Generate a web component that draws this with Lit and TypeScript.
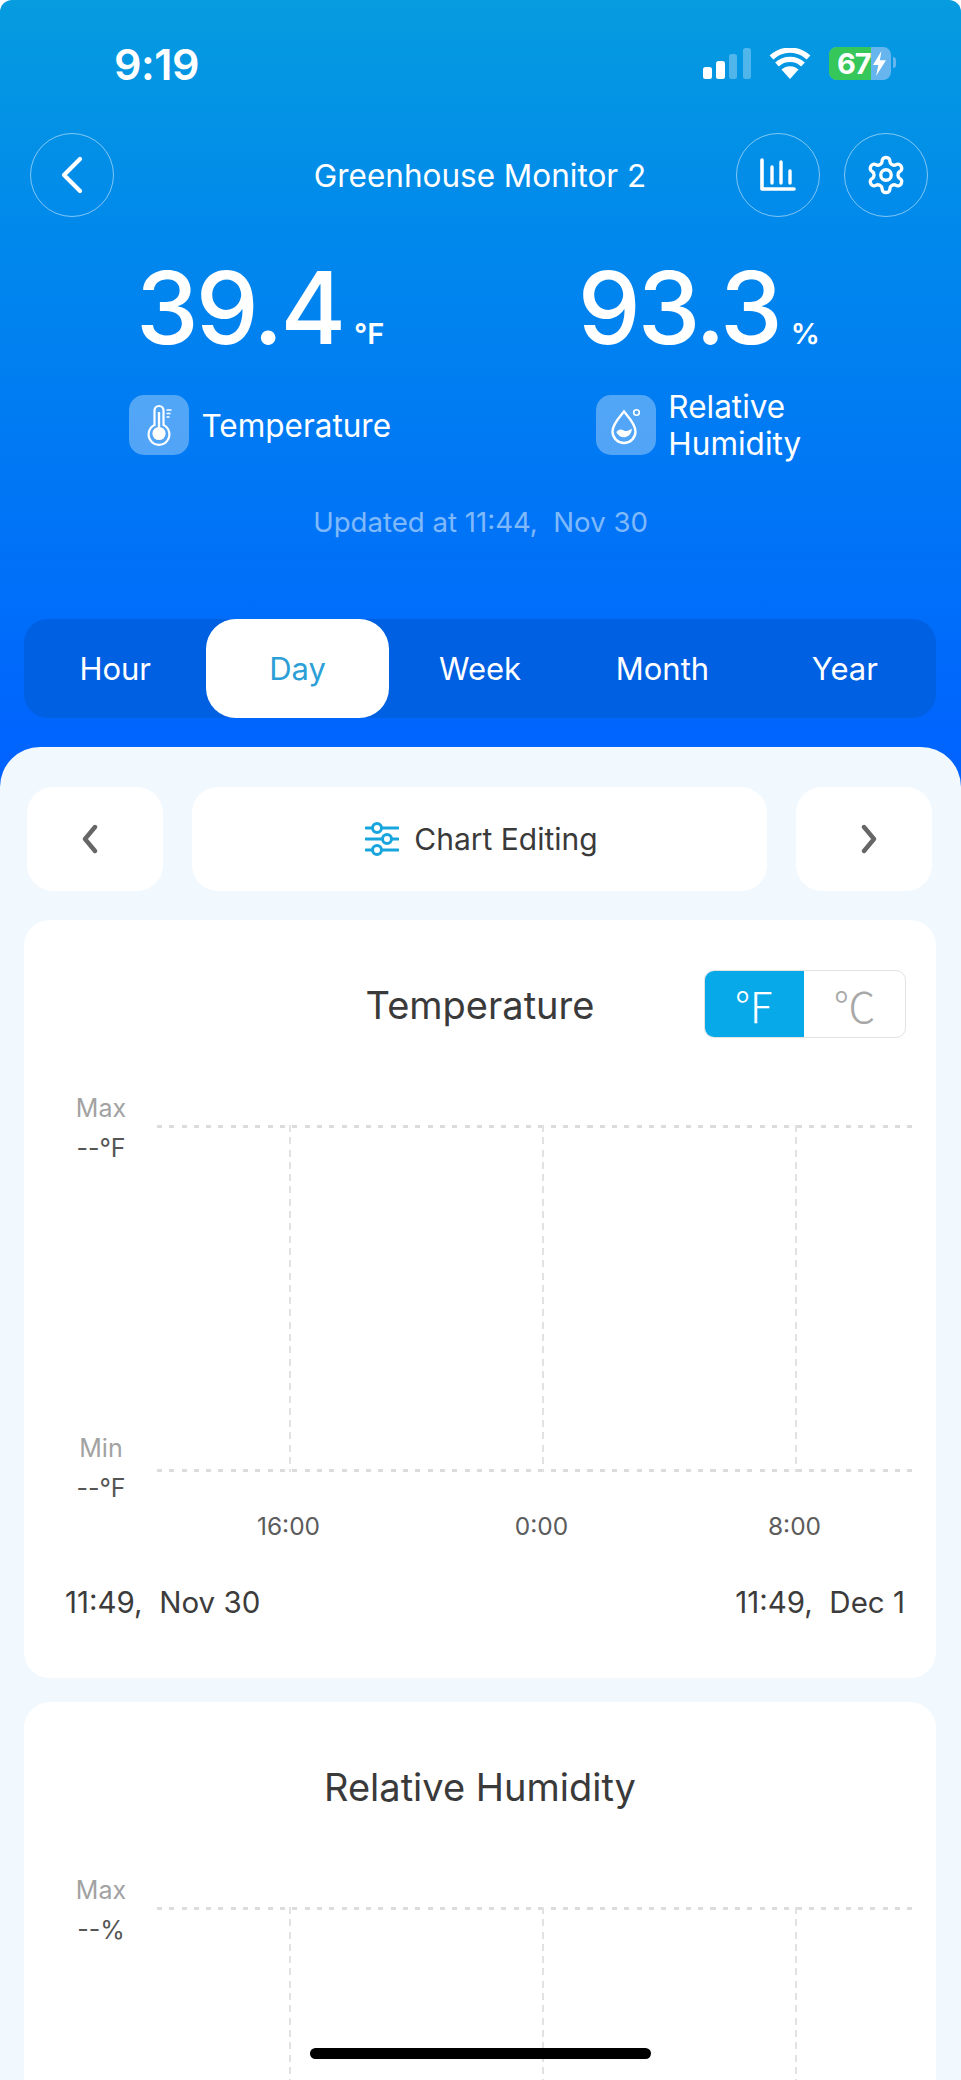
import { css, html, LitElement, svg } from "lit";
import { customElement } from "lit/decorators.js";

const tabs = ["Hour", "Day", "Week", "Month", "Year"];

@customElement("chart-card")
class ChartCard extends LitElement {
  static properties = {
    heading: {},
    unit: {},
    toggle: { type: Boolean },
    cropped: { type: Boolean },
  };

  heading = "";
  unit = "";
  toggle = false;
  // the lower card runs off the bottom of the screen, so its lower labels are never seen
  cropped = false;

  static styles = css`
    :host {
      display: block;
      background: #fff;
      border-radius: 26px;
      margin: 0 25px 0 24px;
      padding: 50px 0 0;
      height: 708px;
    }

    .head {
      position: relative;
      height: 70px;
      display: flex;
      align-items: center;
      justify-content: center;
      font-size: 38px;
      color: #3a3a3a;
    }

    .toggle {
      position: absolute;
      right: 30px;
      top: 0;
      display: flex;
      width: 202px;
      height: 68px;
      box-sizing: border-box;
      border: 1.5px solid #e2e2e2;
      border-radius: 10px;
      overflow: hidden;
      font-family: "Noto Sans CJK SC", sans-serif;
      font-size: 42px;
      font-weight: 300;
    }

    .toggle span {
      flex: 1;
      display: flex;
      align-items: center;
      justify-content: center;
      color: #a8a8a8;
    }

    .toggle .on {
      background: #08a9e9;
      color: #fff;
      margin: -1.5px 0 -1.5px -1.5px;
    }

    .chart {
      display: flex;
      margin-top: 47px;
    }

    .axis {
      width: 133px;
      height: 421px;
      flex: none;
      display: flex;
      flex-direction: column;
      justify-content: space-between;
      box-sizing: border-box;
      padding: 2px 0 0 39px;
    }

    .mark {
      width: 76px;
      text-align: center;
      font-size: 25px;
      line-height: 39.5px;
    }

    .mark .label {
      color: #a2a2a2;
      display: block;
    }

    .mark .value {
      color: #555;
      display: block;
    }

    .plot {
      flex: 1;
      min-width: 0;
      padding: 38px 21px 0 0;
    }

    .grid {
      display: grid;
      grid-template-columns: 132px 253px 253px 120px;
      height: 347px;
      background:
        repeating-linear-gradient(90deg, #dcdcdc 0 5px, transparent 5px 12.3px) 0 0 / 100% 3px no-repeat,
        repeating-linear-gradient(90deg, #dcdcdc 0 5px, transparent 5px 12.3px) 0 100% / 100% 3px no-repeat;
    }

    .grid i {
      display: block;
      background: repeating-linear-gradient(180deg, #e2e2e2 0 7px, transparent 7px 12.3px) 0 0 / 2px 100% no-repeat;
    }

    .grid i.blank {
      background: none;
    }

    .ticks {
      display: grid;
      grid-template-columns: 253px 253px 253px;
      margin: 38px 0 0 5px;
      font-size: 24.5px;
      line-height: 32px;
      color: #5c5c5c;
      text-align: center;
    }

    .span {
      display: flex;
      justify-content: space-between;
      margin-top: 40px;
      padding: 0 31px 0 41px;
      font-size: 29.5px;
      line-height: 40px;
      color: #3c3c3c;
      white-space: pre;
    }
  `;

  render() {
    return html`
      <div class="head">
        ${this.heading}
        ${this.toggle
          ? html`<div class="toggle"><span class="on">℉</span><span>℃</span></div>`
          : ""}
      </div>
      <div class="chart">
        <div class="axis">
          <div class="mark"><span class="label">Max</span><span class="value">--${this.unit}</span></div>
          ${this.cropped
            ? ""
            : html`<div class="mark"><span class="label">Min</span><span class="value">--${this.unit}</span></div>`}
        </div>
        <div class="plot">
          <div class="grid"><i class="blank"></i><i></i><i></i><i></i></div>
          ${this.cropped
            ? ""
            : html`<div class="ticks"><span>16:00</span><span>0:00</span><span>8:00</span></div>`}
        </div>
      </div>
      ${this.cropped
        ? ""
        : html`<div class="span"><span>11:49,  Nov 30</span><span>11:49,  Dec 1</span></div>`}
    `;
  }
}

@customElement("app-root")
class AppRoot extends LitElement {
  static styles = css`
    :host {
      display: block;
      position: relative;
      height: 2080px;
      overflow: hidden;
      border-radius: 12px 12px 0 0;
      font-family: Inter, "Noto Sans", sans-serif;
      background: #f1f8fe linear-gradient(180deg, #069cdf 0, #0088ec 240px, #0063ff 760px) 0 0 / 100% 800px no-repeat;
      color: #fff;
    }

    .status {
      display: flex;
      justify-content: space-between;
      align-items: flex-start;
      height: 133px;
      box-sizing: border-box;
      padding: 40px 70px 0 114px;
    }

    .time {
      font-size: 43px;
      line-height: 48px;
      font-weight: 600;
      letter-spacing: -0.5px;
    }

    .status-icons {
      display: flex;
      align-items: center;
      margin-top: 7px;
      gap: 18px;
    }

    .battery {
      position: relative;
      width: 62px;
      height: 33px;
      border-radius: 8px;
      overflow: hidden;
      background: #66b5ee;
      display: flex;
      align-items: center;
    }

    .battery .level {
      position: absolute;
      inset: 0 20px 0 0;
      background: #35c759;
    }

    .battery b {
      position: relative;
      font-size: 29px;
      line-height: 33px;
      font-weight: 700;
      padding-left: 8px;
      letter-spacing: -1px;
    }

    .battery svg {
      position: relative;
      margin-left: 2px;
    }

    .nub {
      position: absolute;
      right: 65px;
      top: 57px;
      width: 3px;
      height: 11px;
      border-radius: 0 3px 3px 0;
      background: #66b5ee;
    }

    .nav {
      display: flex;
      align-items: center;
      gap: 24px;
      padding: 0 33px 0 30px;
    }

    .title {
      flex: 1;
      text-align: center;
      font-size: 31.5px;
      padding-left: 110px;
      white-space: nowrap;
    }

    .round {
      width: 84px;
      height: 84px;
      box-sizing: border-box;
      flex: none;
      border: 1.5px solid rgba(255, 255, 255, 0.5);
      border-radius: 50%;
      display: flex;
      align-items: center;
      justify-content: center;
    }

    .readings {
      display: grid;
      grid-template-columns: 1fr 1fr;
      padding: 0 43px 0 41px;
      margin-top: 41px;
    }

    .reading {
      display: flex;
      flex-direction: column;
      align-items: center;
    }

    .value {
      display: flex;
      align-items: baseline;
      line-height: 100px;
    }

    .value strong {
      font-size: 100px;
      font-weight: 500;
      letter-spacing: -3px;
    }

    .value small {
      font-size: 29px;
      font-weight: 600;
      margin-left: 11px;
    }

    .name {
      display: flex;
      align-items: center;
      gap: 12px;
      height: 74px;
      margin-top: 4px;
      font-size: 31.5px;
      line-height: 37px;
    }

    .tile {
      width: 60px;
      height: 60px;
      border-radius: 15px;
      background: rgba(255, 255, 255, 0.32);
      flex: none;
    }

    .updated {
      text-align: center;
      margin-top: 40px;
      font-size: 27.6px;
      line-height: 40px;
      color: rgba(255, 255, 255, 0.5);
    }

    .tabs {
      display: flex;
      margin: 77px 25px 0 24px;
      height: 99px;
      background: #0060e2;
      border-radius: 24px;
    }

    .tab {
      flex: 1;
      display: flex;
      align-items: center;
      justify-content: center;
      font-size: 31px;
    }

    .tab.active {
      background: #fff;
      color: #2b9fd6;
      border-radius: 30px;
    }

    .sheet {
      margin-top: 29px;
      background: #f1f8fe;
      border-radius: 40px 40px 0 0;
      padding-top: 40px;
    }

    .tools {
      display: grid;
      grid-template-columns: 136px 1fr 136px;
      gap: 29px;
      margin: 0 29px 29px 27px;
      height: 104px;
    }

    .tool {
      background: #fff;
      border-radius: 26px;
      display: flex;
      align-items: center;
      justify-content: center;
      gap: 15px;
      font-size: 30px;
      color: #3a3a3a;
    }

    .tool.wide {
      padding-left: 4px;
    }

    .tool .prev {
      margin-right: 10px;
    }

    .tool .next {
      margin-left: 10px;
    }

    chart-card + chart-card {
      margin-top: 24px;
    }

    .home {
      position: absolute;
      left: 310px;
      bottom: 21px;
      width: 341px;
      height: 11px;
      border-radius: 6px;
      background: #000;
    }
  `;

  render() {
    return html`
      <div class="status">
        <div class="time">9:19</div>
        <div class="status-icons">
          <svg width="48" height="31" viewBox="0 0 48 31">
            <rect x="0" y="19" width="9" height="12" rx="2.5" fill="#fff" />
            <rect x="13" y="13" width="9" height="18" rx="2.5" fill="#fff" />
            <rect x="26" y="6" width="8" height="25" rx="2.5" fill="#fff" fill-opacity=".3" />
            <rect x="40" y="0" width="8" height="31" rx="2.5" fill="#fff" fill-opacity=".3" />
          </svg>
          <svg width="42" height="31" viewBox="0 0 42 31" fill="none" stroke="#fff" stroke-width="5.4">
            <path d="M21 31 12.5 21.5A12.5 12.5 0 0 1 29.5 21.5Z" fill="#fff" stroke="none" />
            <path d="M8 16.5A19 19 0 0 1 34 16.5" />
            <path d="M2.5 9.5A27 27 0 0 1 39.5 9.5" />
          </svg>
          <div class="battery">
            <div class="level"></div>
            <b>67</b>
            <svg width="13" height="25" viewBox="0 0 17 27" preserveAspectRatio="none">
              <path d="M11 0 0 15h7l-3 12 13-17H9z" fill="#fff" />
            </svg>
          </div>
        </div>
        <div class="nub"></div>
      </div>

      <div class="nav">
        <div class="round">
          <svg width="24" height="38" viewBox="0 0 24 38" fill="none" stroke="#fff" stroke-width="4.2" stroke-linecap="round" stroke-linejoin="round">
            <path d="M20 3 4 19l16 16" />
          </svg>
        </div>
        <div class="title">Greenhouse Monitor 2</div>
        <div class="round">
          <svg width="36" height="34" viewBox="0 0 36 34" fill="none" stroke="#fff" stroke-linecap="round">
            <path d="M2 2v29h32" stroke-width="3.6" stroke-linejoin="round" />
            <path d="M12 9v16M21 4v21M30 13v12" stroke-width="3.4" />
          </svg>
        </div>
        <div class="round">
          <svg width="42" height="42" viewBox="0 0 24 24" fill="none" stroke="#fff" stroke-width="1.9" stroke-linecap="round" stroke-linejoin="round">
            <path d="M12.22 2h-.44a2 2 0 0 0-2 2v.18a2 2 0 0 1-1 1.73l-.43.25a2 2 0 0 1-2 0l-.15-.08a2 2 0 0 0-2.73.73l-.22.38a2 2 0 0 0 .73 2.73l.15.1a2 2 0 0 1 1 1.72v.51a2 2 0 0 1-1 1.74l-.15.09a2 2 0 0 0-.73 2.73l.22.38a2 2 0 0 0 2.73.73l.15-.08a2 2 0 0 1 2 0l.43.25a2 2 0 0 1 1 1.73V20a2 2 0 0 0 2 2h.44a2 2 0 0 0 2-2v-.18a2 2 0 0 1 1-1.73l.43-.25a2 2 0 0 1 2 0l.15.08a2 2 0 0 0 2.73-.73l.22-.39a2 2 0 0 0-.73-2.73l-.15-.08a2 2 0 0 1-1-1.74v-.5a2 2 0 0 1 1-1.74l.15-.09a2 2 0 0 0 .73-2.73l-.22-.38a2 2 0 0 0-2.73-.73l-.15.08a2 2 0 0 1-2 0l-.43-.25a2 2 0 0 1-1-1.73V4a2 2 0 0 0-2-2z" />
            <circle cx="12" cy="12" r="3" />
          </svg>
        </div>
      </div>

      <div class="readings">
        <div class="reading">
          <div class="value"><strong>39.4</strong><small>°F</small></div>
          <div class="name">
            <svg class="tile" viewBox="0 0 60 60">${thermometer}</svg>
            <span>Temperature</span>
          </div>
        </div>
        <div class="reading">
          <div class="value"><strong>93.3</strong><small>%</small></div>
          <div class="name">
            <svg class="tile" viewBox="0 0 60 60">${droplet}</svg>
            <span>Relative<br />Humidity</span>
          </div>
        </div>
      </div>

      <div class="updated">Updated at 11:44,&nbsp; Nov 30</div>

      <div class="tabs">
        ${tabs.map((t) => html`<div class="tab ${t === "Day" ? "active" : ""}">${t}</div>`)}
      </div>

      <div class="sheet">
        <div class="tools">
          <div class="tool">
            <svg class="prev" width="20" height="30" viewBox="0 0 20 30" fill="none" stroke="#666" stroke-width="4.4" stroke-linecap="round" stroke-linejoin="round"><path d="M15 3 5 15l10 12" /></svg>
          </div>
          <div class="tool wide">
            <svg width="34" height="36" viewBox="0 0 34 36" fill="none" stroke="#18a5dd" stroke-width="3">
              <path d="M1 7h6M17 7h16M1 18h16M27 18h6M1 29h6M17 29h16" stroke-linecap="round" />
              <circle cx="12" cy="7" r="4.5" />
              <circle cx="22" cy="18" r="4.5" />
              <circle cx="12" cy="29" r="4.5" />
            </svg>
            <span>Chart Editing</span>
          </div>
          <div class="tool">
            <svg class="next" width="20" height="30" viewBox="0 0 20 30" fill="none" stroke="#666" stroke-width="4.4" stroke-linecap="round" stroke-linejoin="round"><path d="M5 3l10 12L5 27" /></svg>
          </div>
        </div>
        <chart-card heading="Temperature" unit="°F" toggle></chart-card>
        <chart-card heading="Relative Humidity" unit="%" cropped></chart-card>
      </div>

      <div class="home"></div>
    `;
  }
}

const thermometer = svg`
  <g transform="translate(2 -1)">
    <g fill="none" stroke="#fff" stroke-width="2.2">
      <path d="M23.5 31V16.5a4.5 4.5 0 0 1 9 0V31a10.4 10.4 0 1 1-9 0z" />
      <path d="M35.5 16h5M35.5 19.5h4M35.5 23h3" stroke-width="1.6" />
    </g>
    <circle cx="28" cy="39.5" r="6.6" fill="#fff" />
    <rect x="26.8" y="18" width="2.4" height="18" fill="#fff" />
  </g>
`;

const droplet = svg`
  <g fill="none" stroke="#fff" stroke-width="2.4">
    <path d="M28 16.5C23.5 22 16.5 29 16.5 36.5a11.5 11.5 0 0 0 23 0C39.5 29 32.5 22 28 16.5z" />
    <circle cx="40.5" cy="17.5" r="2.8" stroke-width="1.6" />
  </g>
  <path d="M20.3 37c2.5-3.2 5-3 7.5-1.6s5 .6 8-1.8a8 8 0 0 1-15.5 3.4z" fill="#fff" />
`;

declare global {
  interface HTMLElementTagNameMap {
    "app-root": AppRoot;
    "chart-card": ChartCard;
  }
}
